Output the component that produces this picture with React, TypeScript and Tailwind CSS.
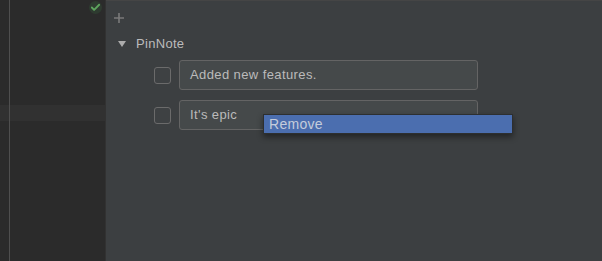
import { Check } from 'lucide-react';

const Note = ({ text }: { text: string }) => (
  <div className="flex items-center h-[30px]">
    <div className="w-[17px] h-[17px] ml-[155px] rounded-[3px] border border-[#6b6b6b] bg-[#3e4143]" />
    <div className="ml-[8px] w-[299px] h-[30px] rounded-[3px] border border-[#646464] bg-[#45494a] flex items-center px-[10px] text-[13px] tracking-[0.4px] text-[#bbbbbb]">
      {text}
    </div>
  </div>
);

export default function App() {
  return (
    <div
      className="relative flex w-[602px] h-[261px] bg-[#3c3f41] overflow-hidden"
      style={{ fontFamily: '"Liberation Sans", Arial, sans-serif' }}
    >
      {/* editor gutter */}
      <div className="relative w-[106px] h-full bg-[#2b2b2b] border-r border-[#323232] flex flex-col">
        <div className="absolute left-[9px] top-0 w-[1px] h-full bg-[#4f4f4f]" />
        <div className="flex justify-end pr-[3px] pt-[1px]">
          <div className="w-[13px] h-[13px] rounded-full bg-[#2e3b30] flex items-center justify-center">
            <Check className="w-[11px] h-[11px] text-[#5ea55e]" strokeWidth={4} />
          </div>
        </div>
        <div className="mt-[91px] h-[16px] bg-[#313131]" />
      </div>

      {/* tool window */}
      <div className="flex-1 border-t border-[#454545] flex flex-col">
        <div className="h-[22px] flex items-end pl-[7px]">
          <svg width="12" height="12" viewBox="0 0 12 12" className="mb-[-1px]">
            <path d="M6 1v10M1 6h10" stroke="#7a7a7a" strokeWidth="1.6" />
          </svg>
        </div>
        <div className="mt-[13px] h-[16px] flex items-center pl-[12px] text-[13px] tracking-[0.3px] text-[#bbbbbb]">
          <svg width="8" height="6" viewBox="0 0 8 6">
            <path d="M0 0h8L4 6z" fill="#acacac" />
          </svg>
          <span className="ml-[10px]">PinNote</span>
        </div>
        <div className="mt-[8px] flex flex-col gap-[10px] -ml-[107px]">
          <Note text="Added new features." />
          <Note text="It's epic" />
        </div>
      </div>

      {/* context menu */}
      <div className="absolute left-[263px] top-[114px] w-[250px] h-[20px] border border-[#2d2f30] bg-[#3c3f41] shadow-[0_3px_6px_rgba(0,0,0,0.45)]">
        <div className="h-full bg-[#4b6eaf] flex items-center pl-[5px] text-[14px] tracking-[0.3px] text-[#c4ccdb]">
          Remove
        </div>
      </div>
    </div>
  );
}
